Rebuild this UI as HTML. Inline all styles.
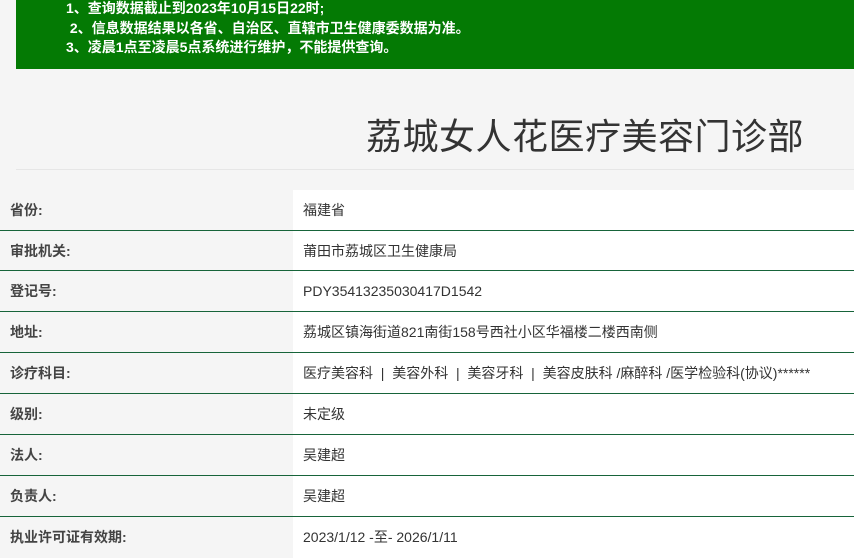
<!DOCTYPE html>
<html><head><meta charset="utf-8">
<style>
*{margin:0;padding:0;box-sizing:border-box}
body{width:854px;height:553px;overflow:hidden;background:#f5f5f5;font-family:"Liberation Sans","Noto Sans CJK SC",sans-serif;position:relative}
.banner{position:absolute;left:16px;top:0;width:838px;height:69px;background:#047a04;color:#fff;font-size:14px;font-weight:bold;line-height:19px;padding:0 0 0 50px}
.banner div{height:19.5px;white-space:nowrap}
.title{position:absolute;left:366px;top:108px;font-size:36px;color:#333;letter-spacing:0.5px;white-space:nowrap}
.hr{position:absolute;left:16px;right:0;top:169px;height:1px;background:#e6e6e6}
.row{position:absolute;left:0;width:854px;height:41px;border-bottom:1.5px solid #17643a}
.row .l{position:absolute;left:0;top:0;width:293px;height:100%;background:#f5f5f5;font-size:14px;font-weight:bold;color:#444;padding-left:10px;line-height:40px}
.row .v{position:absolute;left:293px;top:0;right:0;height:100%;background:#fff;font-size:14px;color:#333;padding-left:10px;line-height:40px;white-space:nowrap}
</style></head><body>
<div class="banner" style="padding-top:0">
<div style="margin-top:-1px">1、查询数据截止到2023年10月15日22时;</div>
<div>&nbsp;2、信息数据结果以各省、自治区、直辖市卫生健康委数据为准。</div>
<div>3、凌晨1点至凌晨5点系统进行维护，不能提供查询。</div>
</div>
<div class="title">荔城女人花医疗美容门诊部</div>
<div class="hr"></div>
<div class="row" style="top:190px"><div class="l">省份:</div><div class="v">福建省</div></div>
<div class="row" style="top:231px;height:40px"><div class="l">审批机关:</div><div class="v">莆田市荔城区卫生健康局</div></div>
<div class="row" style="top:271px"><div class="l">登记号:</div><div class="v">PDY35413235030417D1542</div></div>
<div class="row" style="top:312px"><div class="l">地址:</div><div class="v">荔城区镇海街道821南街158号西社小区华福楼二楼西南侧</div></div>
<div class="row" style="top:353px"><div class="l">诊疗科目:</div><div class="v">医疗美容科 &nbsp;| &nbsp;美容外科 &nbsp;| &nbsp;美容牙科 &nbsp;| &nbsp;美容皮肤科 /麻醉科 /医学检验科(协议)******</div></div>
<div class="row" style="top:394px"><div class="l">级别:</div><div class="v">未定级</div></div>
<div class="row" style="top:435px"><div class="l">法人:</div><div class="v">吴建超</div></div>
<div class="row" style="top:476px"><div class="l">负责人:</div><div class="v">吴建超</div></div>
<div class="row" style="top:517px;border-bottom:none"><div class="l">执业许可证有效期:</div><div class="v">2023/1/12 -至- 2026/1/11</div></div>
</body></html>
